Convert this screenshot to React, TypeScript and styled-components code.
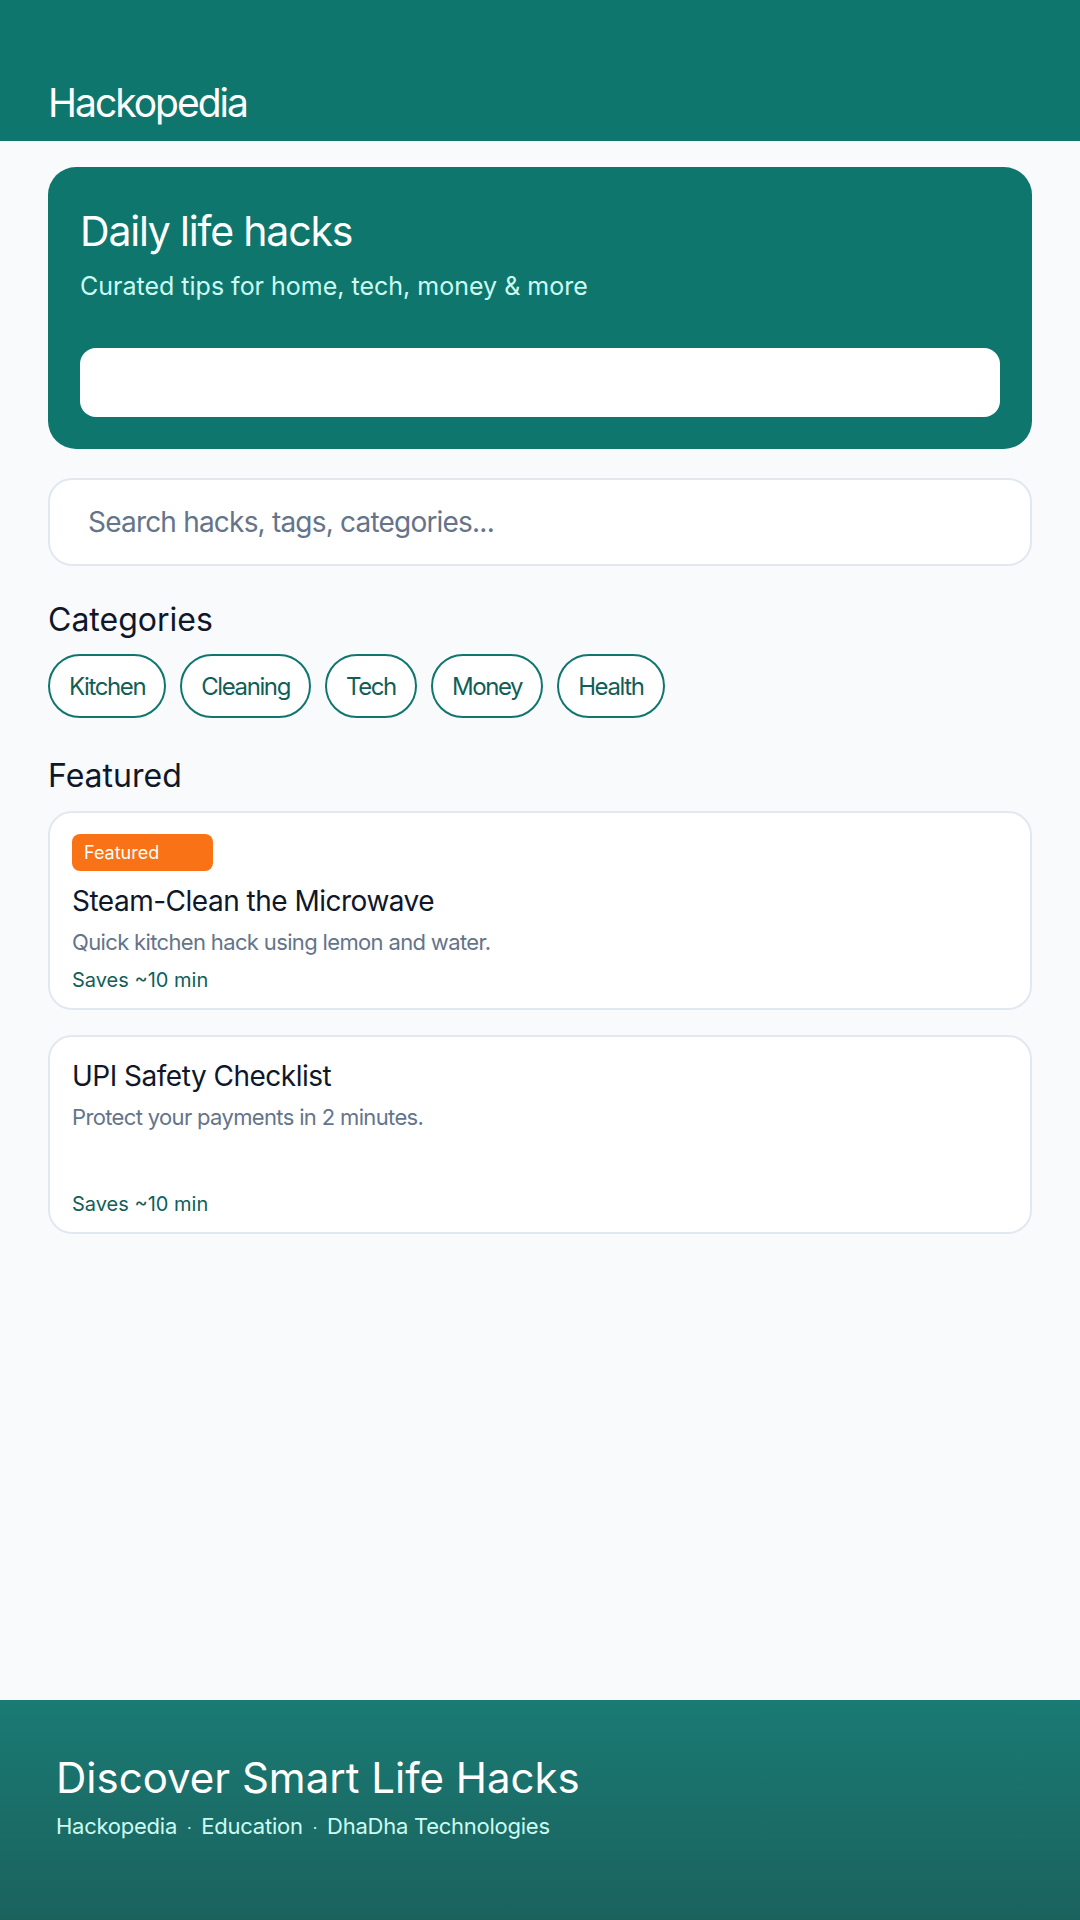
import React from "react";
import styled, { createGlobalStyle } from "styled-components";

const GlobalStyle = createGlobalStyle`
  * { box-sizing: border-box; }
  html, body { margin: 0; padding: 0; background: #f8fafc; }
  body { font-family: Inter, Roboto, "Noto Sans", sans-serif; color: #0f172a; }
`;

const Page = styled.div`
  min-height: 100vh;
  display: flex;
  flex-direction: column;
`;

const TopBar = styled.header`
  height: 141px;
  background: #0f766e;
  display: flex;
  align-items: flex-end;
  padding: 0 48px 14px;
`;

const Brand = styled.h1`
  margin: 0;
  font-size: 39px;
  line-height: 48px;
  font-weight: 400;
  letter-spacing: -2px;
  color: #ffffff;
`;

const Main = styled.main`
  flex: 1;
  padding: 26px 48px 40px;
  display: flex;
  flex-direction: column;
`;

const Hero = styled.section`
  background: #0f766e;
  border-radius: 28px;
  padding: 32px;
  display: flex;
  flex-direction: column;
`;

const HeroTitle = styled.h2`
  margin: 0;
  font-size: 41px;
  line-height: 64px;
  font-weight: 400;
  letter-spacing: -1.2px;
  color: #ffffff;
`;

const HeroSub = styled.p`
  margin: 5px 0 0;
  font-size: 25px;
  line-height: 36px;
  color: #ccfbf1;
`;

const HeroSlot = styled.div`
  margin-top: 44px;
  height: 69px;
  background: #ffffff;
  border-radius: 16px;
`;

const SearchField = styled.input`
  margin-top: 29px;
  height: 88px;
  width: 100%;
  border: 2px solid #e2e8f0;
  border-radius: 24px;
  background: #ffffff;
  padding: 0 38px;
  font-family: inherit;
  font-size: 28px;
  letter-spacing: -0.8px;
  color: #0f172a;
  outline: none;
  &::placeholder { color: #64748b; }
`;

const SectionTitle = styled.h3<{ $gap: number }>`
  margin: ${(p) => p.$gap}px 0 0;
  font-size: 32px;
  line-height: 40px;
  font-weight: 400;
  color: #0f172a;
`;

const ChipRow = styled.div`
  margin-top: 14px;
  display: flex;
  flex-wrap: wrap;
  gap: 14px;
`;

const Chip = styled.button`
  height: 64px;
  padding: 0 19px;
  border: 2px solid #0f766e;
  border-radius: 999px;
  background: #ffffff;
  font-family: inherit;
  font-size: 24px;
  letter-spacing: -1.4px;
  color: #115e59;
  cursor: pointer;
`;

const CardList = styled.div`
  margin-top: 15px;
  display: flex;
  flex-direction: column;
  gap: 25px;
`;

const Card = styled.article`
  min-height: 199px;
  background: #ffffff;
  border: 2px solid #e2e8f0;
  border-radius: 24px;
  padding: 21px 22px 14px;
  display: flex;
  flex-direction: column;
`;

const Badge = styled.span`
  align-self: flex-start;
  min-width: 141px;
  height: 37px;
  padding: 0 12px;
  border-radius: 8px;
  background: #f97316;
  color: #ffffff;
  font-size: 18px;
  line-height: 37px;
  margin-bottom: 12px;
`;

const CardTitle = styled.h4`
  margin: 0;
  font-size: 28px;
  line-height: 36px;
  font-weight: 400;
  letter-spacing: -0.5px;
  color: #0f172a;
`;

const CardText = styled.p`
  margin: 8px 0 0;
  font-size: 22px;
  line-height: 30px;
  letter-spacing: -0.65px;
  color: #64748b;
`;

const Saves = styled.div`
  margin-top: auto;
  padding-top: 9px;
  font-size: 20px;
  line-height: 28px;
  color: #115e59;
`;

const Footer = styled.footer`
  height: 220px;
  background: linear-gradient(180deg, #1a7a74 0%, #1b625d 100%);
  padding: 52px 56px 0;
`;

const FooterTitle = styled.h2`
  margin: 0;
  font-size: 42px;
  line-height: 52px;
  font-weight: 400;
  color: #ffffff;
`;

const FooterMeta = styled.p`
  margin: 8px 0 0;
  font-size: 22px;
  line-height: 28px;
  letter-spacing: -0.25px;
  color: #ccfbf1;
`;

const Dot = styled.span`
  margin: 0 10px;
  font-size: 16px;
`;

const categories = ["Kitchen", "Cleaning", "Tech", "Money", "Health"];

const hacks = [
  {
    title: "Steam-Clean the Microwave",
    text: "Quick kitchen hack using lemon and water.",
    saves: "Saves ~10 min",
    featured: true,
  },
  {
    title: "UPI Safety Checklist",
    text: "Protect your payments in 2 minutes.",
    saves: "Saves ~10 min",
    featured: false,
  },
];

export default function App() {
  return (
    <Page>
      <GlobalStyle />
      <TopBar>
        <Brand>Hackopedia</Brand>
      </TopBar>
      <Main>
        <Hero>
          <HeroTitle>Daily life hacks</HeroTitle>
          <HeroSub>Curated tips for home, tech, money &amp; more</HeroSub>
          <HeroSlot />
        </Hero>
        <SearchField placeholder="Search hacks, tags, categories..." />
        <SectionTitle $gap={34}>Categories</SectionTitle>
        <ChipRow>
          {categories.map((c) => (
            <Chip key={c}>{c}</Chip>
          ))}
        </ChipRow>
        <SectionTitle $gap={38}>Featured</SectionTitle>
        <CardList>
          {hacks.map((h) => (
            <Card key={h.title}>
              {h.featured && <Badge>Featured</Badge>}
              <CardTitle>{h.title}</CardTitle>
              <CardText>{h.text}</CardText>
              <Saves>{h.saves}</Saves>
            </Card>
          ))}
        </CardList>
      </Main>
      <Footer>
        <FooterTitle>Discover Smart Life Hacks</FooterTitle>
        <FooterMeta>
          Hackopedia<Dot>·</Dot>Education<Dot>·</Dot>DhaDha Technologies
        </FooterMeta>
      </Footer>
    </Page>
  );
}
